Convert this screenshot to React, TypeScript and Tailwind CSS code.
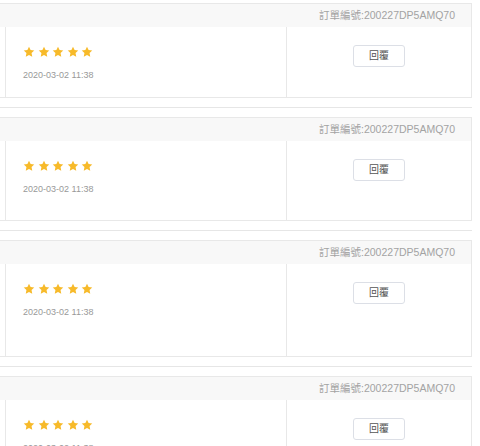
import React from 'react';

const orders = [
  { id: 1, bodyH: 'h-[70px]' },
  { id: 2, bodyH: 'h-[79px]' },
  { id: 3, bodyH: 'h-[92px]' },
  { id: 4, bodyH: 'h-[92px]' },
];

const Star = () => (
  <svg viewBox="0 0 24 24" className="w-[12px] h-[12px]" fill="#f7ba2a">
    <path d="M12 1.5l3.2 6.7 7.3.9-5.4 5.1 1.4 7.3L12 17.9l-6.5 3.6 1.4-7.3-5.4-5.1 7.3-.9z" />
  </svg>
);

const ReviewCard = ({ bodyH }: { bodyH: string }) => {
  return (
    <div className="w-[472px] border-y border-r border-[#e8e8e8] bg-white">
      {/* order header */}
      <div className="h-[23px] bg-[#f8f8f8] flex items-center justify-end pr-[16px]">
        <span className="text-[10.5px] text-[#a3a3a3] leading-none">訂單編號:200227DP5AMQ70</span>
      </div>

      {/* body */}
      <div className={`flex ${bodyH}`}>
        <div className="w-[5px] shrink-0" />
        <div className="w-[281px] shrink-0 border-l border-[#e8e8e8] pl-[17px] pt-[19px]">
          <div className="flex gap-[2.5px]">
            <Star />
            <Star />
            <Star />
            <Star />
            <Star />
          </div>
          <div className="mt-[11px] text-[9px] leading-[12px] text-[#999]">2020-03-02 11:38</div>
        </div>
        <div className="flex-1 border-l border-[#e8e8e8] flex justify-center pt-[18px]">
          <button className="w-[52px] h-[22px] border border-[#dcdfe6] rounded-[3px] bg-white text-[10px] text-[#555] leading-none">
            回覆
          </button>
        </div>
      </div>
    </div>
  );
};

const App = () => {
  return (
    <div
      className="w-[480px] h-[446px] overflow-hidden bg-white pt-[3px]"
      style={{ fontFamily: '"Liberation Sans", "Noto Sans CJK TC", sans-serif' }}
    >
      {orders.map((o, i) => (
        <div key={o.id}>
          {i > 0 && (
            <div className="py-[9px]">
              <div className="w-[472px] h-px bg-[#e6e6e6]" />
            </div>
          )}
          <ReviewCard bodyH={o.bodyH} />
        </div>
      ))}
    </div>
  );
};

export default App;
